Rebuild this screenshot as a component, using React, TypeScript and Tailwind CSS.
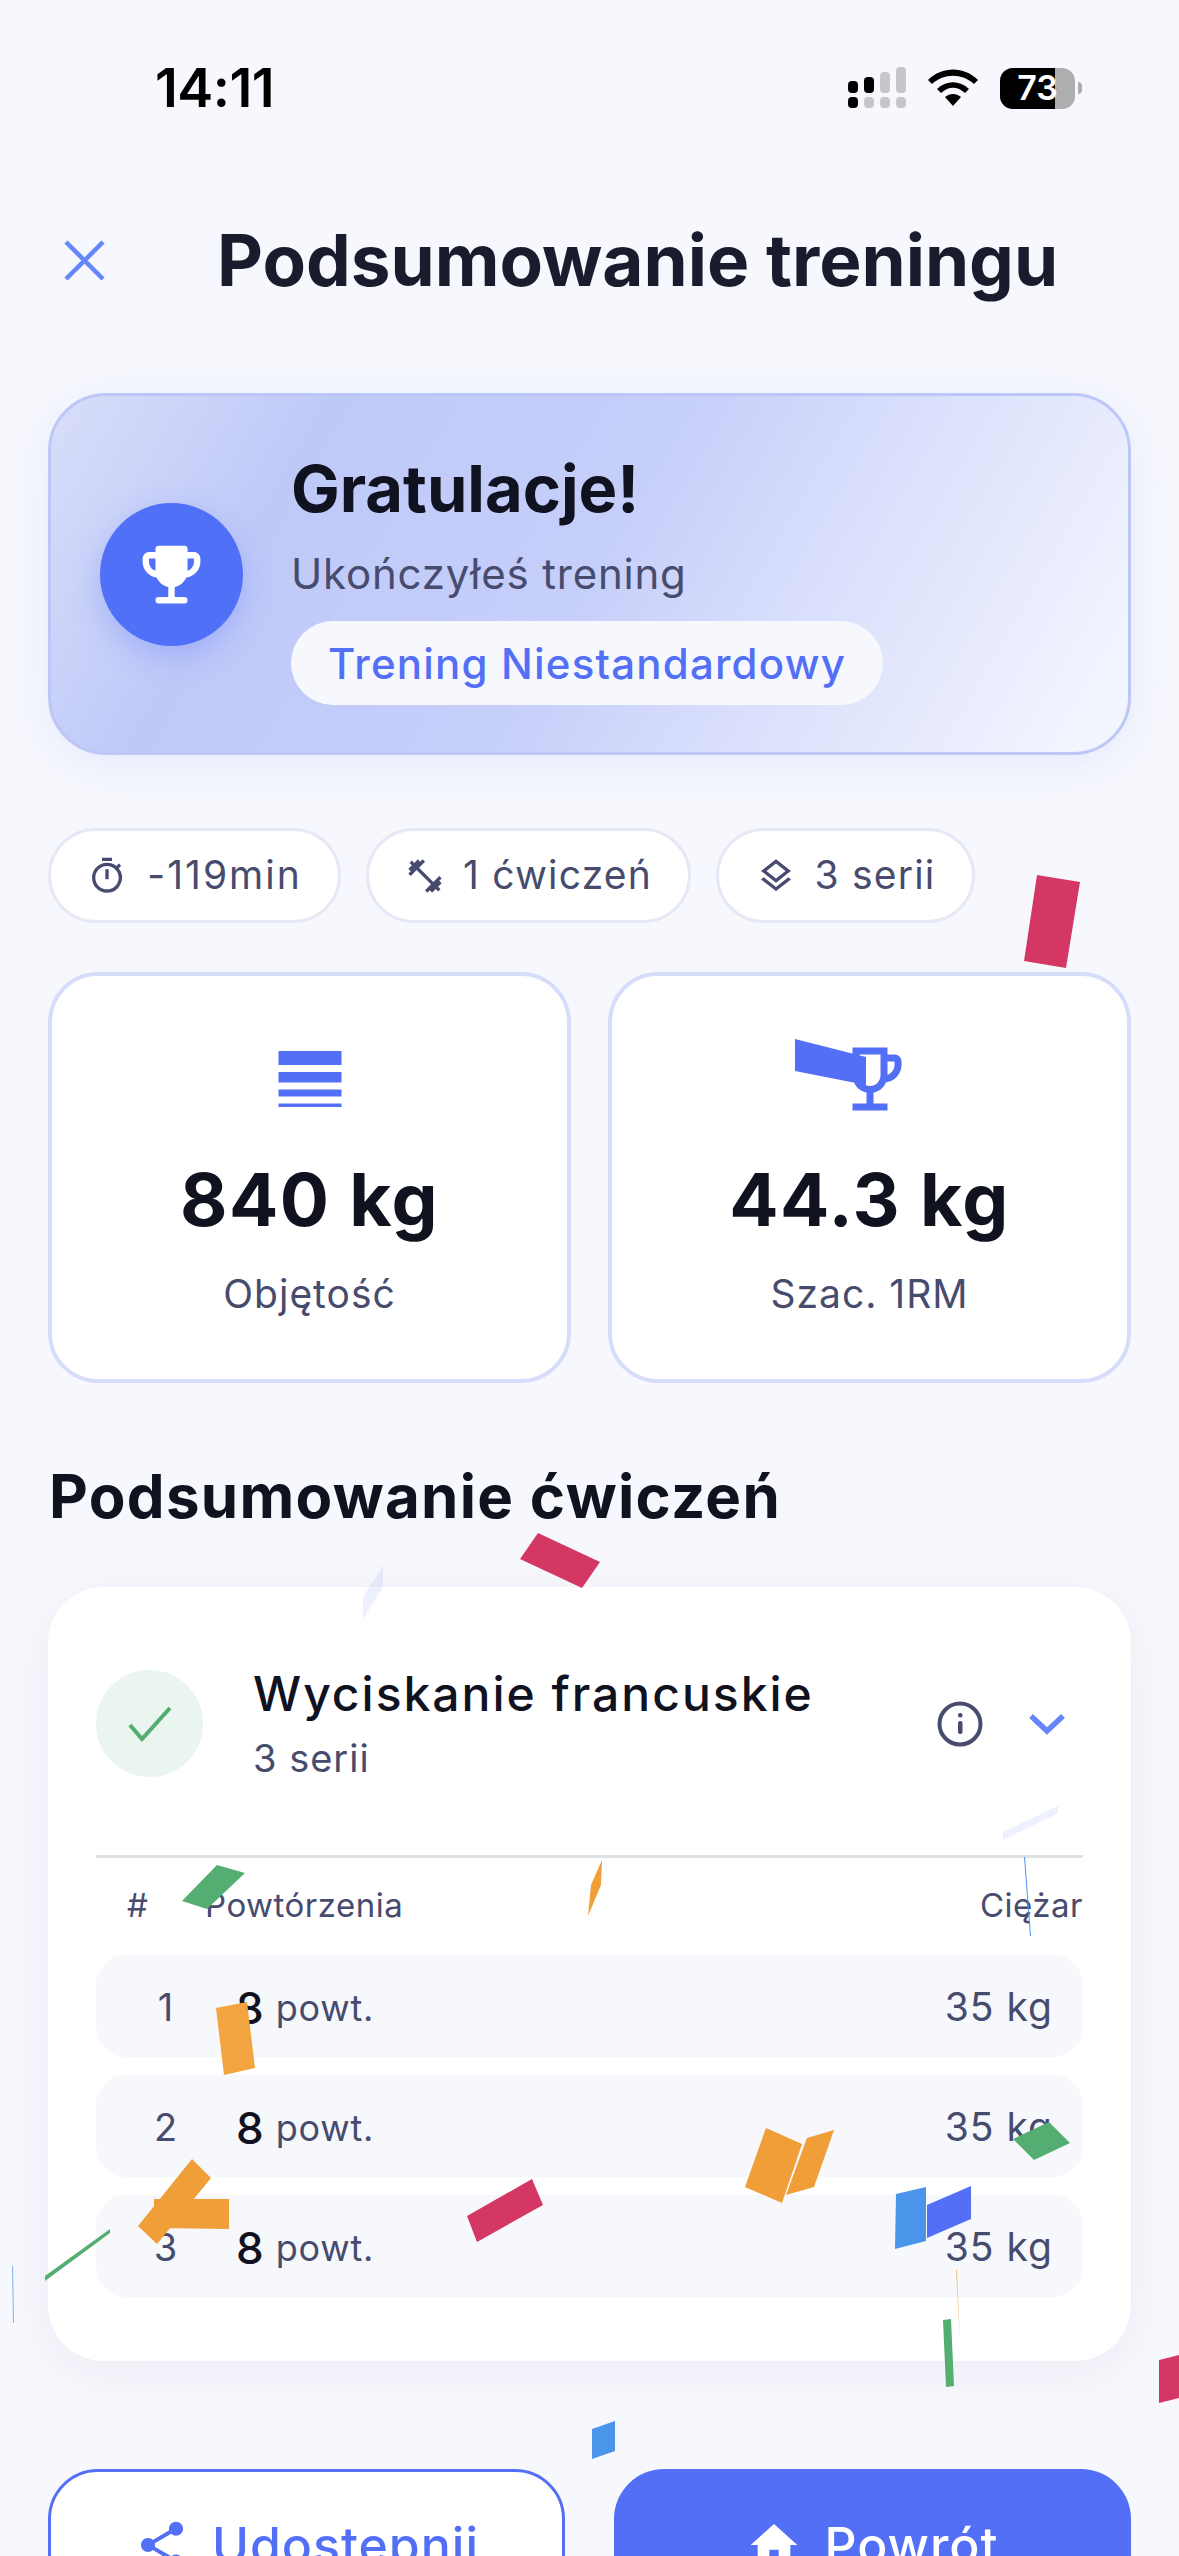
import React from 'react';
import {
  MdOutlineTimer,
  MdFitnessCenter,
  MdOutlineLayers,
  MdLineWeight,
  MdOutlineEmojiEvents,
  MdShare,
  MdHome,
} from 'react-icons/md';

const pieces: { points: string; fill: string; opacity?: number }[] = [
  { points: '1037,875 1080,882 1066,968 1024,961', fill: '#d43763' },
  { points: '795,1039 866,1057 866,1085 795,1071', fill: '#536ff6' },
  { points: '538,1533 600,1562 582,1588 520,1559', fill: '#d43763' },
  { points: '383,1566 383,1587 363,1619 363,1597', fill: '#536ff6', opacity: 0.1 },
  { points: '1058,1806 1058,1813 1003,1840 1003,1832', fill: '#536ff6', opacity: 0.1 },
  { points: '1024,1857 1025,1857 1031,1936 1030,1936', fill: '#4a94ea' },
  { points: '602,1860 601,1885 588,1916 591,1885', fill: '#f09e38' },
  { points: '217,1865 245,1873 207,1909 182,1901', fill: '#54ae72' },
  { points: '216,2008 247,2002 255,2068 224,2075', fill: '#f2a441' },
  { points: '154,2199 229,2199 229,2229 154,2228', fill: '#f09e38' },
  { points: '192,2159 211,2178 157,2244 138,2226', fill: '#f09e38' },
  { points: '110,2229 110,2233 45,2281 45,2276', fill: '#54ae72' },
  { points: '12,2266 13,2266 14,2323 13,2323', fill: '#4a94ea', opacity: 0.7 },
  { points: '467,2216 532,2179 543,2205 477,2242', fill: '#d43763' },
  { points: '766,2128 802,2144 782,2203 745,2187', fill: '#f09e38' },
  { points: '807,2138 834,2130 814,2187 786,2195', fill: '#f09e38' },
  { points: '1049,2122 1070,2143 1034,2160 1013,2139', fill: '#54ae72' },
  { points: '896,2194 926,2187 926,2241 895,2249', fill: '#4a94ea' },
  { points: '927,2205 971,2186 971,2219 927,2238', fill: '#536ff6' },
  { points: '956,2270 957,2270 960,2343', fill: '#f09e38', opacity: 0.7 },
  { points: '943,2320 951,2319 954,2386 946,2387', fill: '#54ae72' },
  { points: '1159,2360 1179,2355 1179,2398 1159,2403', fill: '#d43763' },
  { points: '615,2421 592,2429 592,2459 615,2451', fill: '#4a94ea' },
];

const chips = [
  { icon: MdOutlineTimer, label: '-119min', width: 'w-[293px]', gap: 'gap-[20px]', spacing: 'tracking-[2px]' },
  { icon: MdFitnessCenter, label: '1 ćwiczeń', width: 'w-[325px]', gap: 'gap-[18px]', spacing: 'tracking-[1.2px]' },
  { icon: MdOutlineLayers, label: '3 serii', width: 'w-[259px]', gap: 'gap-[19px]', spacing: 'tracking-[1.2px]' },
];

const sets = [1, 2, 3];

function StatusBar() {
  return (
    <div className="h-[176px] shrink-0 flex items-center justify-between pl-[155px] pr-[97px]">
      <span className="text-[54px] font-semibold leading-none text-black tracking-[-0.5px]">14:11</span>
      <div className="flex items-center gap-[22px]">
        <svg width="58" height="42" viewBox="0 0 58 42">
          <rect x="0" y="14" width="10" height="12" rx="4" fill="#000" />
          <rect x="16" y="10" width="10" height="16" rx="4" fill="#000" />
          <rect x="32" y="5" width="10" height="21" rx="4" fill="#c6c7cc" />
          <rect x="48" y="0" width="10" height="26" rx="4" fill="#c6c7cc" />
          <rect x="0" y="30" width="10" height="11" rx="4" fill="#000" />
          <rect x="16" y="30" width="10" height="11" rx="4" fill="#c6c7cc" />
          <rect x="32" y="30" width="10" height="11" rx="4" fill="#c6c7cc" />
          <rect x="48" y="30" width="10" height="11" rx="4" fill="#c6c7cc" />
        </svg>
        <svg width="50" height="38" viewBox="0 0 50 38">
          <path d="M0 11 C14 -3 36 -3 50 11 L46 15 C34 4 16 4 4 15 Z" fill="#000" />
          <path d="M9 20 C18 11 32 11 41 20 L37 24 C29 17 21 17 13 24 Z" fill="#000" />
          <path d="M17 28 C22 24 28 24 33 28 L25 37 Z" fill="#000" />
        </svg>
        <div className="flex items-center">
          <div className="relative w-[75px] h-[41px] rounded-[13px] bg-[#aeaeb0] overflow-hidden">
            <div className="absolute inset-y-0 left-0 w-[55px] bg-black" />
            <span className="absolute inset-0 flex items-center justify-center text-[34px] font-semibold text-white leading-none">73</span>
          </div>
          <div className="ml-[3px] w-[4px] h-[12px] rounded-r-full bg-[#aeaeb0]" />
        </div>
      </div>
    </div>
  );
}

export default function App() {
  return (
    <div className="relative w-[1179px] h-[2556px] overflow-hidden bg-[#f7f8fd] font-['Inter',sans-serif] text-[#10121f]">
      <StatusBar />

      {/* Header */}
      <div className="h-[170px] flex items-center pl-[64px] pb-[2px]">
        <svg width="41" height="41" viewBox="0 0 41 41" className="shrink-0">
          <path d="M2 2 L39 39 M39 2 L2 39" stroke="#6686fb" strokeWidth="4.5" fill="none" />
        </svg>
        <h1 className="ml-[112px] text-[71px] font-bold leading-none text-[#1a1c2e] whitespace-nowrap">
          Podsumowanie treningu
        </h1>
      </div>

      <div className="px-[48px] mt-[47px]">
        {/* Hero */}
        <div className="h-[362px] rounded-[58px] border-[3px] border-[#bcc7f8] bg-[linear-gradient(120deg,#d8def9_0%,#bfc9f8_22%,#c6cffa_50%,#dde2fc_72%,#f2f4fe_95%)] shadow-[0_10px_50px_rgba(83,111,246,0.1)] flex items-center pl-[49px]">
          <div className="w-[143px] h-[143px] rounded-full bg-[#5070f7] shadow-[0_10px_30px_rgba(83,111,246,0.3)] flex items-center justify-center shrink-0">
            <svg width="77" height="77" viewBox="0 0 24 24">
              <path
                fill="#fff"
                fillRule="evenodd"
                d="M8 3h8a1 1 0 0 1 1 1v1h2a2 2 0 0 1 2 2v1c0 2.55-1.92 4.63-4.39 4.94-.63 1.5-1.98 2.63-3.61 2.96V19h3a1 1 0 0 1 0 2H8a1 1 0 0 1 0-2h3v-3.1c-1.63-.33-2.98-1.46-3.61-2.96C4.92 12.63 3 10.55 3 8V7a2 2 0 0 1 2-2h2V4a1 1 0 0 1 1-1z M5 7v1c0 1.3.84 2.4 2 2.82V7H5z M17 7v3.82c1.16-.42 2-1.52 2-2.82V7h-2z"
              />
            </svg>
          </div>
          <div className="ml-[48px] pt-[8px] flex flex-col items-start">
            <span className="text-[65px] font-bold leading-[76px]">Gratulacje!</span>
            <span className="mt-[22px] text-[42px] leading-[50px] tracking-[0.8px] text-[#474b6e]">Ukończyłeś trening</span>
            <span className="mt-[22px] h-[84px] px-[37px] rounded-full bg-[#f7f8fd] flex items-center text-[42px] font-medium tracking-[1.2px] text-[#536ff6]">
              Trening Niestandardowy
            </span>
          </div>
        </div>

        {/* Chips */}
        <div className="mt-[73px] flex gap-[25px]">
          {chips.map((c) => {
            const Icon = c.icon;
            return (
              <div
                key={c.label}
                className={`${c.width} ${c.gap} ${c.spacing} h-[95px] rounded-full border-[3px] border-[#e6e8f5] bg-white flex items-center justify-center text-[39px] text-[#474b6e]`}
              >
                <Icon size={40} color="#474b6e" />
                <span>{c.label}</span>
              </div>
            );
          })}
        </div>

        {/* Stats */}
        <div className="mt-[49px] flex gap-[37px]">
          <div className="w-[523px] h-[411px] rounded-[50px] border-[4px] border-[#d6ddfb] bg-white flex flex-col items-center pt-[61px]">
            <MdLineWeight size={84} color="#536ff6" />
            <span className="mt-[33px] text-[73px] font-bold leading-[92px] tracking-[1.5px]">840 kg</span>
            <span className="mt-[24px] text-[39px] leading-[48px] tracking-[1px] text-[#474b6e]">Objętość</span>
          </div>
          <div className="w-[523px] h-[411px] rounded-[50px] border-[4px] border-[#d6ddfb] bg-white flex flex-col items-center pt-[61px]">
            <MdOutlineEmojiEvents size={84} color="#536ff6" />
            <span className="mt-[33px] text-[73px] font-bold leading-[92px] tracking-[1.5px]">44.3 kg</span>
            <span className="mt-[24px] text-[39px] leading-[48px] tracking-[1px] text-[#474b6e]">Szac. 1RM</span>
          </div>
        </div>

        <h2 className="mt-[78px] pl-[1px] text-[60px] font-bold leading-[70px] tracking-[1.3px]">Podsumowanie ćwiczeń</h2>

        {/* Exercise card */}
        <div className="mt-[56px] h-[774px] rounded-[56px] bg-white shadow-[0_12px_50px_rgba(30,40,100,0.05)] px-[48px] pt-[78px]">
          <div className="flex items-center">
            <div className="w-[107px] h-[107px] rounded-full bg-[#e9f5ee] flex items-center justify-center shrink-0">
              <svg width="44" height="36" viewBox="0 0 44 36">
                <path d="M2 19 L14 33 L42 2" stroke="#52ad70" strokeWidth="4" fill="none" />
              </svg>
            </div>
            <div className="ml-[50px] flex-1">
              <div className="text-[48px] font-medium leading-[58px] tracking-[2px]">Wyciskanie francuskie</div>
              <div className="mt-[11px] text-[38px] leading-[48px] tracking-[1px] text-[#474b6e]">3 serii</div>
            </div>
            <svg width="46" height="46" viewBox="0 0 46 46" className="shrink-0">
              <circle cx="23" cy="23" r="20.5" stroke="#474b6e" strokeWidth="4" fill="none" />
              <rect x="21" y="20" width="4.5" height="13" rx="2" fill="#474b6e" />
              <rect x="21" y="12" width="4.5" height="4.5" rx="2" fill="#474b6e" />
            </svg>
            <svg width="36" height="22" viewBox="0 0 36 22" className="ml-[46px] mr-[18px] shrink-0">
              <path d="M2 3 L18 18 L34 3" stroke="#6686fb" strokeWidth="5.5" fill="none" />
            </svg>
          </div>

          <div className="mt-[73px] h-[3px] bg-[#dfe3e8]" />

          <div className="mt-[26px] flex items-center h-[44px] pl-[31px] text-[33px] tracking-[0.5px] text-[#474b6e]">
            <span className="w-[78px]">#</span>
            <span className="flex-1">Powtórzenia</span>
            <span>Ciężar</span>
          </div>

          <div className="mt-[27px] flex flex-col gap-[18px]">
            {sets.map((n) => (
              <div key={n} className="h-[102px] rounded-[30px] bg-[#f6f8fc] flex items-center pr-[30px] pt-[3px]">
                <span className="w-[140px] text-center text-[38px] tracking-[1px] text-[#474b6e]">{n}</span>
                <span className="text-[44px] font-medium text-[#10121f]">8</span>
                <span className="ml-[12px] flex-1 text-[36px] tracking-[0.8px] text-[#474b6e]">powt.</span>
                <span className="text-[39px] tracking-[1px] text-[#474b6e]">35 kg</span>
              </div>
            ))}
          </div>
        </div>

        {/* Actions */}
        <div className="mt-[108px] flex gap-[49px]">
          <button className="w-[517px] h-[152px] rounded-[50px] border-[3px] border-[#536ff6] bg-white flex items-center justify-center gap-[22px] text-[50px] font-medium tracking-[1px] text-[#536ff6]">
            <MdShare size={56} color="#536ff6" />
            Udostępnij
          </button>
          <button className="w-[517px] h-[152px] rounded-[50px] bg-[#536ff6] flex items-center justify-center gap-[22px] text-[50px] font-medium tracking-[1px] text-white">
            <MdHome size={56} color="#fff" />
            Powrót
          </button>
        </div>
      </div>

      {/* Confetti */}
      <svg className="absolute inset-0 pointer-events-none" width="1179" height="2556" viewBox="0 0 1179 2556">
        {pieces.map((p) => (
          <polygon key={p.points} points={p.points} fill={p.fill} opacity={p.opacity ?? 1} />
        ))}
      </svg>
    </div>
  );
}
